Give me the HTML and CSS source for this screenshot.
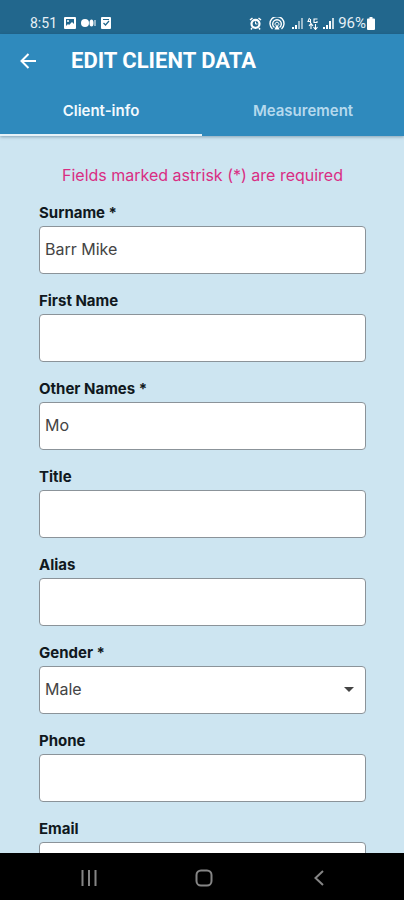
FILE: index.html
```html
<!DOCTYPE html>
<html lang="en">
<head>
<meta charset="utf-8">
<meta name="viewport" content="width=device-width, initial-scale=1">
<title>Edit client data</title>
<link rel="stylesheet" href="styles.css">
</head>
<body>
<div class="screen">
  <div class="status">
    <div class="status-group">
      <span class="clock">8:51</span>
      <svg class="picture" width="12" height="12" viewBox="0 0 12 12"><rect width="12" height="12" rx="1" fill="#fff"/><path d="M2 2h8v5L8 5 5 8 4 7 2 9z" fill="#22678d"/><circle cx="4" cy="4" r="1" fill="#fff"/></svg>
      <svg width="15" height="12" viewBox="0 0 15 12" fill="#fff"><circle cx="4" cy="6" r="4"/><ellipse cx="10.500" cy="6" rx="2" ry="3.500"/><rect x="13.500" y="3" width="1" height="6"/></svg>
      <svg width="10" height="12" viewBox="0 0 10 12"><rect width="10" height="12" rx="1" fill="#fff"/><path d="M2.500 6 4.500 8 8 4M2 2.500h6" stroke="#22678d" stroke-width="1.200" fill="none"/></svg>
    </div>
    <div class="status-group status-right">
      <svg width="13" height="13" viewBox="0 0 13 13" fill="none" stroke="#fff"><circle cx="6.500" cy="6.800" r="4" stroke-width="2.200"/><path d="M6.500 4.500V7h2" stroke-width="1"/><path d="M1 3 3.500 1M12 3 9.500 1M3 11l-1 1.500M10 11l1 1.500" stroke-width="1.500"/></svg>
      <svg class="hotspot" width="16" height="13" viewBox="0 0 16 13" fill="none" stroke="#fff" stroke-width="1.400"><path d="M3.500 12A7 7 0 1 1 12.500 12M5.500 10.500A4.300 4.300 0 1 1 10.500 10.500"/><path d="M6.500 8.500A2 2 0 1 1 9.500 8.500" stroke-width="1"/><path d="M8 7 5.500 12.500h5z" fill="#fff" stroke="none"/></svg>
      <svg width="11" height="12" viewBox="0 0 11 12" fill="#fff"><path d="M0 10h2v2H0zM3 8h2v4H3z"/><path d="M6 4h2v8H6zM9 1h2v11H9z" opacity=".55"/></svg>
      <svg width="12" height="13" viewBox="0 0 12 13" fill="none" stroke="#fff"><path d="M2.500 1 1 4.500h3M3.500 2v4M10.500 2H7v3.500h3V4M4 7v5M2 9l2-2.500L6 9M8.500 7v5M6.500 10l2 2.500 2-2.500" stroke-width="1.100"/></svg>
      <svg width="11" height="12" viewBox="0 0 11 12" fill="#fff"><path d="M0 10h2v2H0zM3 8h2v4H3z"/><path d="M6 4h2v8H6z"/><path d="M9 1h2v11H9z" opacity=".75"/></svg>
      <span class="battery-text">96%</span>
      <svg width="8" height="13" viewBox="0 0 8 13" fill="#fff"><path d="M2.500 0h3v1.500H7q1 0 1 1V12q0 1-1 1H1q-1 0-1-1V2.500q0-1 1-1h1.500z"/></svg>
    </div>
  </div>

  <header class="appbar">
    <div class="title-row">
      <button class="back" type="button" aria-label="Back">
        <svg width="16" height="16" viewBox="0 0 16 16" fill="none" stroke="#fff" stroke-width="2"><path d="M16 8H1.500M8.500 1 1.500 8l7 7"/></svg>
      </button>
      <h1>EDIT CLIENT DATA</h1>
    </div>
    <nav class="tabs">
      <a class="tab active" href="#client-info" aria-current="page">Client-info</a>
      <a class="tab" href="#measurement">Measurement</a>
    </nav>
  </header>

  <main class="content" id="client-info">
    <p class="notice">Fields marked astrisk (*) are required</p>
    <form class="form">
      <div class="field"><label for="surname">Surname *</label><input id="surname" type="text" value="Barr Mike"></div>
      <div class="field"><label for="first">First Name</label><input id="first" type="text"></div>
      <div class="field"><label for="other">Other Names *</label><input id="other" type="text" value="Mo"></div>
      <div class="field"><label for="title">Title</label><input id="title" type="text"></div>
      <div class="field"><label for="alias">Alias</label><input id="alias" type="text"></div>
      <div class="field">
        <label for="gender">Gender *</label>
        <div class="select-wrap">
          <select id="gender"><option selected>Male</option><option>Female</option></select>
          <svg class="caret" width="10" height="5" viewBox="0 0 10 5"><path d="M0 0h10L5 5z" fill="#444"/></svg>
        </div>
      </div>
      <div class="field"><label for="phone">Phone</label><input id="phone" type="tel"></div>
      <div class="field"><label for="email">Email</label><input id="email" type="email"></div>
    </form>
  </main>

  <div class="sysnav">
    <button type="button" aria-label="Recent apps"><svg width="16" height="16" viewBox="0 0 16 16" stroke="#858585" stroke-width="2"><path d="M1.500 0v16M8 0v16M14.500 0v16"/></svg></button>
    <button type="button" aria-label="Home"><svg width="18" height="18" viewBox="0 0 18 18" fill="none" stroke="#858585" stroke-width="2"><rect x="1.500" y="1.500" width="15" height="15" rx="4.500"/></svg></button>
    <button type="button" aria-label="Go back"><svg width="10" height="16" viewBox="0 0 10 16" fill="none" stroke="#858585" stroke-width="2"><path d="M9 1 1.500 8 9 15"/></svg></button>
  </div>
</div>
</body>
</html>
```
FILE: styles.css
```css
* {
  box-sizing: border-box;
}

body {
  margin: 0;
  font-family: Inter, Roboto, sans-serif;
  color: #101820;
}

svg {
  display: block;
  flex: none;
}

button {
  border: 0;
  padding: 0;
  background: none;
}

.screen {
  display: flex;
  flex-direction: column;
  height: 100vh;
  background: #cde5f1;
}

.status {
  display: flex;
  justify-content: space-between;
  padding: 12px 29px 0 30px;
  height: 34px;
  background: #22678d;
  color: #e6f0f6;
  font: 14px/22px Roboto, sans-serif;
}

.status-group {
  display: flex;
  align-items: center;
  gap: 5px;
}

.picture {
  margin-left: 2px;
}

.status-right {
  gap: 4px;
}

.hotspot {
  margin: 0 3px;
}

.battery-text {
  margin-right: -3px;
  font-size: 15px;
}

.appbar {
  background: #2f8abd;
  box-shadow: 0 1px 3px rgba(0, 40, 70, 0.35);
  z-index: 1;
}

.title-row {
  display: flex;
  align-items: center;
  gap: 35px;
  height: 54px;
  padding-left: 20px;
}

h1 {
  margin: 0;
  font: 700 22px/28px Roboto, sans-serif;
  color: #fff;
}

.tabs {
  display: flex;
}

.tab {
  flex: 1;
  height: 48px;
  border-bottom: 2px solid transparent;
  font-size: 15px;
  font-weight: 600;
  line-height: 46px;
  text-align: center;
  text-decoration: none;
  color: #b5d9ed;
}

.active {
  border-color: #e6f2f8;
  color: #f2f9fd;
}

.content {
  flex: 1;
  min-height: 0;
  overflow: hidden;
  padding: 29px 38px 0 39px;
}

.notice {
  margin: 0 0 18px;
  font-size: 16px;
  line-height: 20px;
  text-align: center;
  color: #d92d83;
}

.form {
  display: grid;
  gap: 16px;
}

label {
  display: block;
  margin-bottom: 3px;
  font-size: 15px;
  font-weight: 700;
  line-height: 20px;
}

input,
select {
  display: block;
  width: 100%;
  height: 48px;
  margin: 0;
  padding: 0 5px 2px;
  border: 1px solid #8b9399;
  border-radius: 4px;
  background: #fff;
  color: #444;
  font: 16px/20px Inter, sans-serif;
}

.form {
  grid-auto-rows: 72px;
}

select {
  appearance: none;
}

.select-wrap {
  position: relative;
}

.caret {
  position: absolute;
  top: 21px;
  right: 12px;
  pointer-events: none;
}

.sysnav {
  display: flex;
  justify-content: space-around;
  align-items: center;
  height: 47px;
  padding: 2px 28px 0 32px;
  background: #000;
}

.sysnav button {
  display: flex;
  justify-content: center;
  width: 48px;
}
```
